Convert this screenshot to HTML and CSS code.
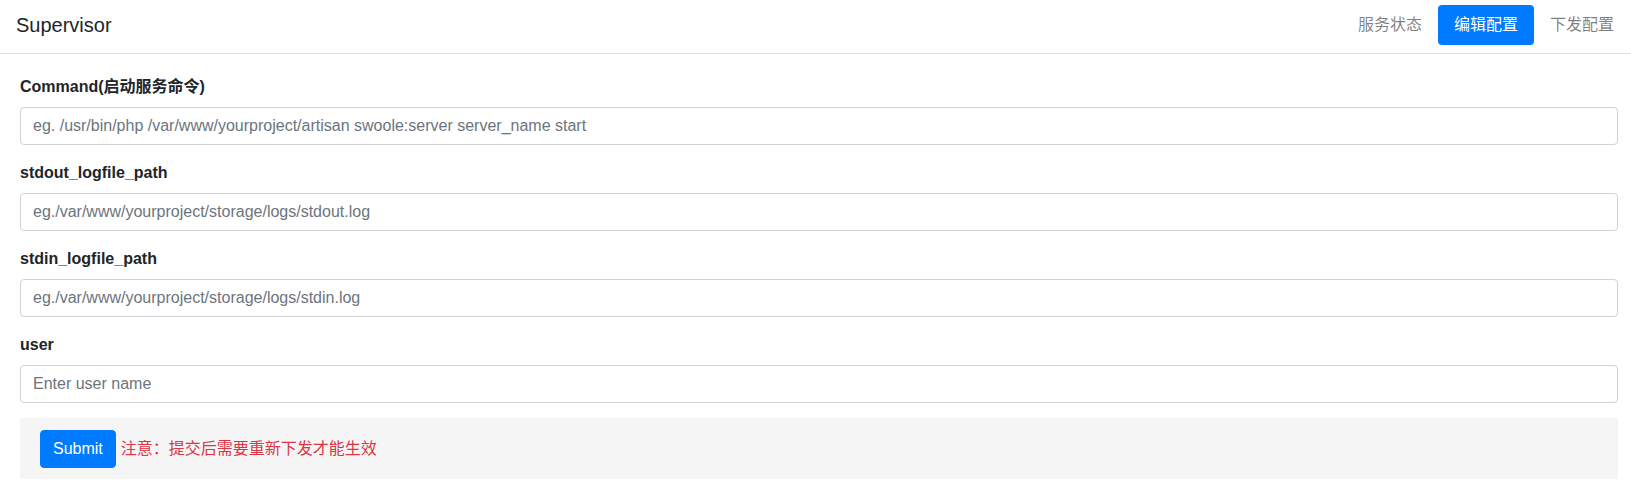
FILE: index.html
```html
<!DOCTYPE html>
<html lang="zh">
<head>
<meta charset="utf-8">
<title>Supervisor</title>
<link rel="stylesheet" href="styles.css">
</head>
<body>
<header class="navbar">
  <div class="brand">Supervisor</div>
  <nav class="nav">
    <a class="nav-link" href="#">服务状态</a>
    <a class="nav-link active" href="#">编辑配置</a>
    <a class="nav-link" href="#">下发配置</a>
  </nav>
</header>
<main class="content">
  <form class="form">
    <div class="group">
      <label class="label">Command(启动服务命令)</label>
      <input class="control" type="text" placeholder="eg. /usr/bin/php /var/www/yourproject/artisan swoole:server server_name start">
    </div>
    <div class="group">
      <label class="label">stdout_logfile_path</label>
      <input class="control" type="text" placeholder="eg./var/www/yourproject/storage/logs/stdout.log">
    </div>
    <div class="group">
      <label class="label">stdin_logfile_path</label>
      <input class="control" type="text" placeholder="eg./var/www/yourproject/storage/logs/stdin.log">
    </div>
    <div class="group">
      <label class="label">user</label>
      <input class="control" type="text" placeholder="Enter user name">
    </div>
    <div class="footer">
      <button class="btn" type="button">Submit</button>
      <span class="notice">注意：提交后需要重新下发才能生效</span>
    </div>
  </form>
</main>
</body>
</html>
```
FILE: styles.css
```css
* { box-sizing: border-box; }
html, body {
  margin: 0;
  padding: 0;
  background: #fff;
  font-family: "Liberation Sans", Arial, "Noto Sans CJK SC", sans-serif;
  font-size: 16px;
  line-height: 24px;
  color: #212529;
}
.navbar {
  display: flex;
  align-items: center;
  justify-content: space-between;
  height: 54px;
  padding: 0 1px 4px 16px;
  border-bottom: 1px solid #dee2e6;
}
.brand {
  font-size: 20px;
  line-height: 30px;
  color: #212529;
}
.nav {
  display: flex;
  align-items: center;
}
.nav-link {
  display: block;
  padding: 8px 16px;
  line-height: 24px;
  color: rgba(0, 0, 0, 0.5);
  text-decoration: none;
  border-radius: 4px;
}
.nav-link.active {
  background: #007bff;
  color: #fff;
}
.content {
  padding: 21px 13px 10px 20px;
}
.group {
  margin-bottom: 16px;
}
.label {
  display: block;
  font-weight: bold;
  margin-bottom: 8px;
  line-height: 24px;
}
.control {
  display: block;
  width: 100%;
  height: 38px;
  padding: 6px 12px;
  font-family: inherit;
  font-size: 16px;
  line-height: 24px;
  color: #495057;
  background: #fff;
  border: 1px solid #ced4da;
  border-radius: 4px;
  outline: none;
}
.control::placeholder {
  color: #6c757d;
  opacity: 1;
}
.footer {
  display: flex;
  align-items: center;
  background: #f5f5f5;
  padding: 12px 20px 11px;
  margin-top: -1px;
}
.btn {
  height: 38px;
  padding: 6px 12px;
  font-family: inherit;
  font-size: 16px;
  line-height: 24px;
  color: #fff;
  background: #007bff;
  border: 1px solid #007bff;
  border-radius: 4px;
  margin-right: 5px;
}
.notice {
  color: #dc3545;
}
```
